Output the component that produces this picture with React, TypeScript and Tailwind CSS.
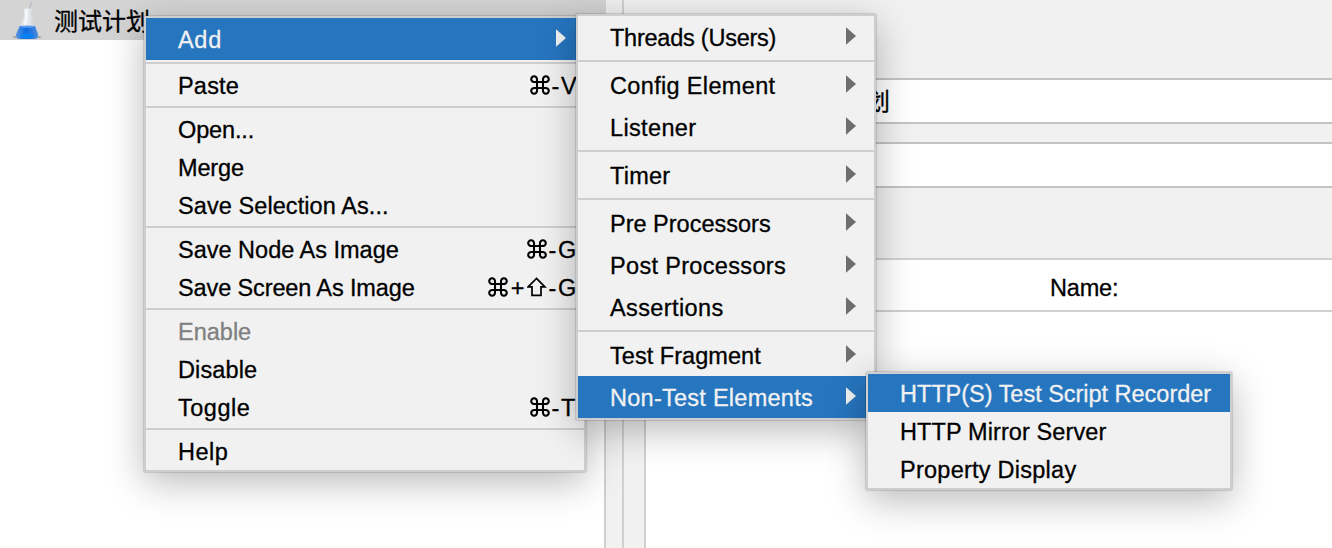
import { Fragment } from "react";

type Item = {
  label: string;
  track: string;
  shortcut?: string;
  arrow?: boolean;
  active?: boolean;
  disabled?: boolean;
  tall?: boolean;
};

const mainMenu: Item[][] = [
  [{ label: "Add", track: "tracking-[0.7px]", arrow: true, active: true, tall: true }],
  [{ label: "Paste", track: "tracking-[0.2px]", shortcut: "⌘-V" }],
  [
    { label: "Open...", track: "tracking-[-0.15px]" },
    { label: "Merge", track: "tracking-[-0.15px]" },
    { label: "Save Selection As...", track: "tracking-[0.08px]" },
  ],
  [
    { label: "Save Node As Image", track: "tracking-[0px]", shortcut: "⌘-G" },
    { label: "Save Screen As Image", track: "tracking-[-0.12px]", shortcut: "⌘+⇧-G" },
  ],
  [
    { label: "Enable", track: "tracking-[0px]", disabled: true },
    { label: "Disable", track: "tracking-[0.12px]" },
    { label: "Toggle", track: "tracking-[0.5px]", shortcut: "⌘-T" },
  ],
  [{ label: "Help", track: "tracking-[0.5px]" }],
];

const addMenu: Item[][] = [
  [{ label: "Threads (Users)", track: "tracking-[-0.24px]", arrow: true, tall: true }],
  [
    { label: "Config Element", track: "tracking-[0.34px]", arrow: true, tall: true },
    { label: "Listener", track: "tracking-[0.35px]", arrow: true, tall: true },
  ],
  [{ label: "Timer", track: "tracking-[0.25px]", arrow: true, tall: true }],
  [
    { label: "Pre Processors", track: "tracking-[0px]", arrow: true, tall: true },
    { label: "Post Processors", track: "tracking-[0.33px]", arrow: true, tall: true },
    { label: "Assertions", track: "tracking-[0.4px]", arrow: true, tall: true },
  ],
  [
    { label: "Test Fragment", track: "tracking-[0.04px]", arrow: true, tall: true },
    { label: "Non-Test Elements", track: "tracking-[0.26px]", arrow: true, active: true, tall: true },
  ],
];

const elementsMenu: Item[][] = [
  [
    { label: "HTTP(S) Test Script Recorder", track: "tracking-[-0.02px]", active: true },
    { label: "HTTP Mirror Server", track: "tracking-[0.1px]" },
    { label: "Property Display", track: "tracking-[0.25px]" },
  ],
];

function CommandKey() {
  return (
    <svg viewBox="0 0 20 20" className="h-5 w-5" fill="none" stroke="currentColor" strokeWidth="2.1">
      <path d="M7 7H4.6A2.9 2.9 0 1 1 7 4.4V15.6A2.9 2.9 0 1 1 4.6 13H15.4A2.9 2.9 0 1 1 13 15.6V4.4A2.9 2.9 0 1 1 15.4 7Z" />
    </svg>
  );
}

function ShiftKey() {
  return (
    <svg viewBox="0 0 20 20" className="h-5 w-5" fill="none" stroke="currentColor" strokeWidth="1.7">
      <path d="M9.5 1.4L17.9 9.9H14V18.4H5V9.9H1.1Z" />
    </svg>
  );
}

function Shortcut({ keys }: { keys: string }) {
  return (
    <span className="flex items-center">
      {[...keys].map((k, i) =>
        k === "⌘" ? (
          <CommandKey key={i} />
        ) : k === "⇧" ? (
          <ShiftKey key={i} />
        ) : k === "-" ? (
          <span key={i} className="w-[11px] pt-0.5 text-center">-</span>
        ) : k === "+" ? (
          <span key={i} className="w-[19px] pt-0.5 text-center">+</span>
        ) : (
          <span key={i} className={`pt-0.5 ${k === "G" ? "w-5" : "w-[17px]"}`}>{k}</span>
        ),
      )}
    </span>
  );
}

function Row({ item }: { item: Item }) {
  const tone = item.active
    ? "bg-[#2675bf] text-[#f1f1f1]"
    : item.disabled
      ? "text-[#808080]"
      : "text-black";
  return (
    <div className={`flex items-center justify-between pl-8 ${item.tall ? "h-[42px]" : "h-[38px]"} ${tone}`}>
      <span className={`pt-0.5 ${item.track}`}>{item.label}</span>
      {item.shortcut && (
        <span className="pr-1.5">
          <Shortcut keys={item.shortcut} />
        </span>
      )}
      {item.arrow && (
        <svg viewBox="0 0 10 18" className={`mb-0.5 mr-[18px] h-[18px] w-2.5 ${item.active ? "fill-[#f1f1f1]" : "fill-[#6e6e6e]"}`}>
          <path d="M0 0.3L10 9L0 17.7Z" />
        </svg>
      )}
    </div>
  );
}

function Menu({ groups, place }: { groups: Item[][]; place: string }) {
  return (
    <div
      className={`absolute rounded-[2px] border-2 border-[#cecece] bg-[#f1f1f1] shadow-[0_0_1px_1px_rgba(0,0,0,0.13),0_10px_38px_rgba(0,0,0,0.28)] ${place}`}
    >
      {groups.map((g, i) => (
        <Fragment key={i}>
          {i > 0 && <div className="my-0.5 h-0.5 bg-[#cecece]" />}
          {g.map((item) => (
            <Row key={item.label} item={item} />
          ))}
        </Fragment>
      ))}
    </div>
  );
}

function FlaskIcon() {
  return (
    <svg viewBox="0 0 30 40" className="h-10 w-[30px]">
      <defs>
        <linearGradient id="liquid" x1="0" x2="1">
          <stop offset="0" stopColor="#5c97dc" />
          <stop offset="0.45" stopColor="#0a6ae2" />
          <stop offset="1" stopColor="#4d8cd8" />
        </linearGradient>
        <linearGradient id="glass" x1="0" x2="1">
          <stop offset="0" stopColor="#b9c3cf" />
          <stop offset="0.45" stopColor="#f4f7fa" />
          <stop offset="1" stopColor="#bcc4cd" />
        </linearGradient>
      </defs>
      <ellipse cx="15" cy="37" rx="14.5" ry="1.3" fill="#7d838c" opacity="0.75" />
      <path d="M19.3 2L17.3 12" stroke="#b9bec6" strokeWidth="1.5" />
      <path d="M12.5 8.5H20.5V10L19.5 10.5V17L26 34Q27 39 22 39H8Q3 39 4 34L12.2 17V10.5L12 10Z" fill="url(#glass)" opacity="0.9" />
      <path d="M7.7 26H23L26 34.5Q26.5 39 22 39H8Q3.5 39 4 34.5Z" fill="url(#liquid)" />
      <ellipse cx="15.3" cy="26.6" rx="7.2" ry="1.2" fill="#5a9dea" />
      <ellipse cx="15" cy="36" rx="7" ry="2.4" fill="#0b80f2" />
      <path d="M14.5 10V19L12 25" stroke="#fff" strokeWidth="1.5" fill="none" opacity="0.7" />
    </svg>
  );
}

export default function App() {
  return (
    <div className="relative flex h-[548px] w-[1332px] overflow-hidden bg-[#f1f1f1] font-['Liberation_Sans','Noto_Sans_CJK_SC',sans-serif] text-[23.5px] leading-[28px] text-black [-webkit-text-stroke:0.3px_currentColor]">
      <div className="h-full w-[606px] border-r-2 border-[#d0d0d0] bg-white">
        <div className="-mr-0.5 flex h-10 items-center bg-[#d4d4d4] pl-3">
          <FlaskIcon />
          <span className="pl-3 pt-[3px] text-[24px]">测试计划</span>
        </div>
      </div>
      <div className="w-[18px] border-r-2 border-[#d0d0d0]" />
      <div className="flex flex-1 flex-col pt-[78px]">
        <div className="ml-[145px] flex h-[46px] items-center border-y-2 border-[#c3c3c3] bg-white pl-6">
          <span className="pl-[1px] pt-px text-[24px]">测试计划</span>
        </div>
        <div className="mt-[18px] ml-[145px] h-[46px] border-y-2 border-[#c3c3c3] bg-white" />
        <div className="mt-[70px] ml-5 flex flex-1 flex-col border-l-2 border-t-2 border-[#d0d0d0] bg-white">
          <div className="flex h-[52px] items-center border-b-2 border-[#d0d0d0] pl-[404px] pt-[5px]">
            <span className="tracking-[-0.2px]">Name:</span>
          </div>
        </div>
      </div>
      <Menu groups={mainMenu} place="left-[144px] top-[16px] w-[442px]" />
      <Menu groups={addMenu} place="left-[576px] top-[14px] w-[300px]" />
      <Menu groups={elementsMenu} place="left-[866px] top-[372px] w-[366px]" />
    </div>
  );
}
